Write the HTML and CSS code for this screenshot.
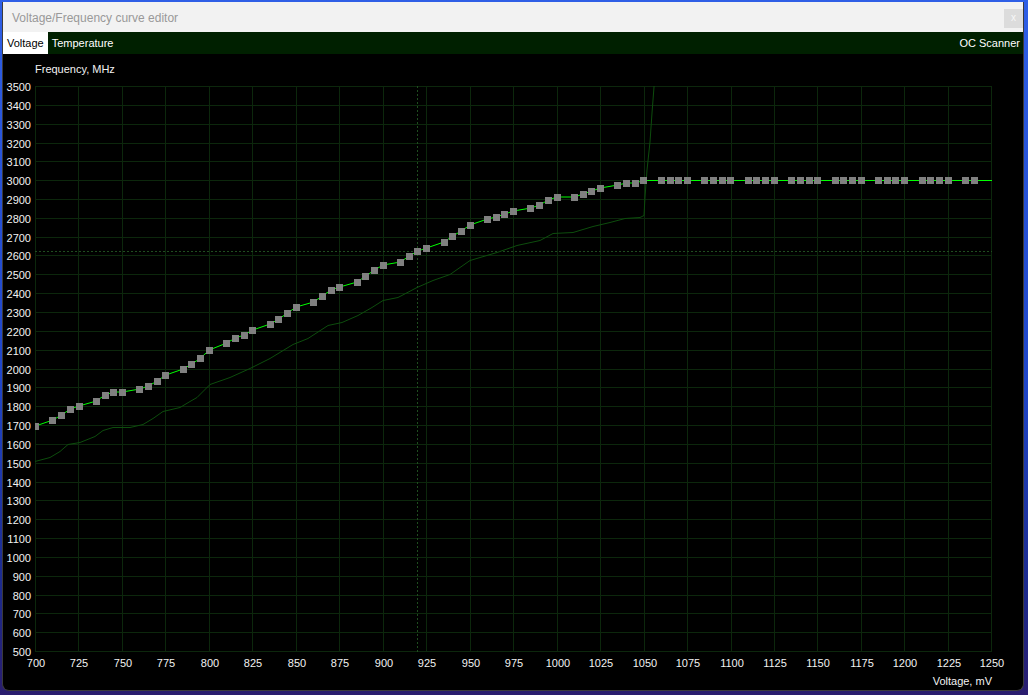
FILE: index.html
```html
<!DOCTYPE html>
<html>
<head>
<meta charset="utf-8">
<link rel="stylesheet" href="styles.css">
</head>
<body>
<div class="window">
  <div class="titlebar">
    <span class="title">Voltage/Frequency curve editor</span>
    <span class="close">x</span>
  </div>
  <div class="tabs">
    <span class="tab active">Voltage</span>
    <span class="tab">Temperature</span>
    <span class="spacer"></span>
    <span class="tab right">OC Scanner</span>
  </div>
  <svg class="chart" width="1020" height="636" viewBox="3 54 1020 636" xmlns="http://www.w3.org/2000/svg">
    <defs>
      <clipPath id="plot"><rect x="35" y="86" width="957" height="566"/></clipPath>
      <marker id="sq" class="sqmarker" markerWidth="7" markerHeight="7" refX="3.5" refY="3.5" markerUnits="userSpaceOnUse">
        <rect class="sq" width="7" height="7"/>
      </marker>
    </defs>
    <text class="axis-title" x="35" y="73">Frequency, MHz</text>
    <path class="grid" d="M35.5 86V652 M78.5 86V652 M122.5 86V652 M165.5 86V652 M209.5 86V652 M252.5 86V652 M296.5 86V652 M339.5 86V652 M383.5 86V652 M426.5 86V652 M470.5 86V652 M513.5 86V652 M557.5 86V652 M600.5 86V652 M644.5 86V652 M687.5 86V652 M731.5 86V652 M774.5 86V652 M817.5 86V652 M861.5 86V652 M904.5 86V652 M948.5 86V652 M991.5 86V652
    M35 86.5H992 M35 105.5H992 M35 124.5H992 M35 143.5H992 M35 161.5H992 M35 180.5H992 M35 199.5H992 M35 218.5H992 M35 237.5H992 M35 255.5H992 M35 274.5H992 M35 293.5H992 M35 312.5H992 M35 331.5H992 M35 350.5H992 M35 369.5H992 M35 387.5H992 M35 406.5H992 M35 425.5H992 M35 444.5H992 M35 463.5H992 M35 482.5H992 M35 500.5H992 M35 519.5H992 M35 538.5H992 M35 557.5H992 M35 576.5H992 M35 595.5H992 M35 613.5H992 M35 632.5H992 M35 651.5H992"/>
    <path class="cross" d="M417.5 86V652 M35 251.5H992"/>
    <g class="ylabels">
      <text x="31" y="91">3500</text><text x="31" y="110">3400</text><text x="31" y="129">3300</text><text x="31" y="148">3200</text><text x="31" y="166">3100</text><text x="31" y="185">3000</text><text x="31" y="204">2900</text><text x="31" y="223">2800</text><text x="31" y="242">2700</text><text x="31" y="260">2600</text><text x="31" y="279">2500</text><text x="31" y="298">2400</text><text x="31" y="317">2300</text><text x="31" y="336">2200</text><text x="31" y="355">2100</text><text x="31" y="374">2000</text><text x="31" y="392">1900</text><text x="31" y="411">1800</text><text x="31" y="430">1700</text><text x="31" y="449">1600</text><text x="31" y="468">1500</text><text x="31" y="487">1400</text><text x="31" y="505">1300</text><text x="31" y="524">1200</text><text x="31" y="543">1100</text><text x="31" y="562">1000</text><text x="31" y="581">900</text><text x="31" y="600">800</text><text x="31" y="618">700</text><text x="31" y="637">600</text><text x="31" y="656">500</text>
    </g>
    <g class="xlabels">
      <text x="36" y="667">700</text><text x="79" y="667">725</text><text x="123" y="667">750</text><text x="166" y="667">775</text><text x="210" y="667">800</text><text x="253" y="667">825</text><text x="297" y="667">850</text><text x="340" y="667">875</text><text x="384" y="667">900</text><text x="427" y="667">925</text><text x="471" y="667">950</text><text x="514" y="667">975</text><text x="558" y="667">1000</text><text x="601" y="667">1025</text><text x="645" y="667">1050</text><text x="688" y="667">1075</text><text x="732" y="667">1100</text><text x="775" y="667">1125</text><text x="818" y="667">1150</text><text x="862" y="667">1175</text><text x="905" y="667">1200</text><text x="949" y="667">1225</text><text x="992" y="667">1250</text>
    </g>
    <text class="axis-title end" x="992" y="685">Voltage, mV</text>
    <g clip-path="url(#plot)">
      <polyline class="stock" points="35,461.5 50,457.5 60,451.5 68,444.5 80,442.5 95,436.5 103,430.5 113,427.5 130,427.5 143,424.5 153,418.5 163,411.5 180,407.5 190,401.5 197,397.5 210,384.5 230,377.5 250,368.5 270,358.5 293,344.5 308,338.5 328,325.5 342,322.5 358,315.5 372,307.5 383,300.5 398,297.5 417,287.5 433,280.5 450,274.5 470,260.5 497,252.5 517,245.5 540,240.5 553,233.5 573,232.5 593,226.5 610,222.5 625,218.5 640,217.5 644,215.5 645,197 647,170 650,142 652,113 654,87 656,60"/>
      <line class="curve" x1="974" y1="180.5" x2="992" y2="180.5"/>
      <polyline class="curve marked" points="35.5,426 52.9,420 61.6,415 70.3,409 79,406 96.3,401 105,395 113.7,392 122.4,392 139.8,389 148.5,386 157.2,381 165.9,375 183.2,369 191.9,364 200.6,358 209.3,350 226.7,343 235.4,338 244.1,335 252.8,330 270.2,324 278.9,319 287.5,313 296.2,307 313.6,302 322.3,296 331,290 339.7,287 357.1,282 365.8,276 374.5,270 383.1,265 400.5,262 409.2,256 417.9,251 426.6,248 444,242 452.7,236 461.4,231 470,225 487.4,219 496.1,217 504.8,214 513.5,211 530.9,208 539.6,205 548.3,200 557,197 574.4,197 583.1,194 591.8,191 600.4,188 617.8,185 626.5,183 635.2,183 643.9,180.5 661.3,180.5 670,180.5 678.7,180.5 687.4,180.5 704.7,180.5 713.4,180.5 722.1,180.5 730.8,180.5 748.2,180.5 756.9,180.5 765.6,180.5 774.3,180.5 791.6,180.5 800.3,180.5 809,180.5 817.7,180.5 835.1,180.5 843.8,180.5 852.5,180.5 861.2,180.5 878.5,180.5 887.2,180.5 895.9,180.5 904.6,180.5 922,180.5 930.7,180.5 939.4,180.5 948.1,180.5 965.5,180.5 974.1,180.5"/>
    </g>
  </svg>
</div>
</body>
</html>
```
FILE: styles.css
```css
html, body {
  margin: 0;
  height: 100%;
}
body {
  background: linear-gradient(180deg, #2f5fe6 0%, #2046c8 55%, #1d2a8c 85%, #2a1d6e 100%);
  font-family: "Liberation Sans", Arial, sans-serif;
  overflow: hidden;
}
.window {
  margin: 2px 0 0 2px;
  width: 1022px;
  height: 689px;
  box-sizing: border-box;
  border: 1px solid #3b3b3b;
  border-top: none;
  border-radius: 0 0 7px 7px;
  background: #000;
  overflow: hidden;
  display: flex;
  flex-direction: column;
}
.titlebar {
  height: 30px;
  flex: none;
  background: #f2f2f2;
  display: flex;
  align-items: center;
  padding-left: 9px;
}
.title {
  font-size: 12px;
  color: #999;
  padding-top: 1px;
}
.close {
  margin-left: auto;
  align-self: flex-start;
  margin-top: 7px;
  width: 19px;
  height: 19px;
  background: #dcdcdc;
  color: #f7f7f7;
  font-size: 10px;
  line-height: 18px;
  text-align: center;
}
.tabs {
  height: 22px;
  flex: none;
  background: #002000;
  display: flex;
  font-size: 11px;
  line-height: 22px;
  color: #fff;
}
.tab {
  padding: 0 4px;
}
.tab.active {
  background: #fff;
  color: #000;
}
.tab.right {
  padding-right: 3px;
}
.spacer {
  flex: 1;
}
.chart {
  display: block;
  flex: none;
  font-family: "Liberation Sans", Arial, sans-serif;
  font-size: 11px;
}
.grid {
  stroke: #0c270c;
  stroke-width: 1;
  fill: none;
  shape-rendering: crispEdges;
}
.cross {
  stroke: #1f4d1f;
  stroke-width: 1;
  stroke-dasharray: 2 2;
  fill: none;
  shape-rendering: crispEdges;
}
.ylabels text {
  fill: #f2f2f2;
  text-anchor: end;
}
.xlabels text {
  fill: #f2f2f2;
  text-anchor: middle;
}
.axis-title {
  fill: #f2f2f2;
}
.axis-title.end {
  text-anchor: end;
}
.stock {
  fill: none;
  stroke: #0d4d0d;
  stroke-width: 1;
}
.curve {
  fill: none;
  stroke: #00ff00;
  stroke-width: 1;
}
.marked {
  marker-start: url(#sq);
  marker-mid: url(#sq);
  marker-end: url(#sq);
}
.sq {
  fill: #808080;
  shape-rendering: crispEdges;
}
```
